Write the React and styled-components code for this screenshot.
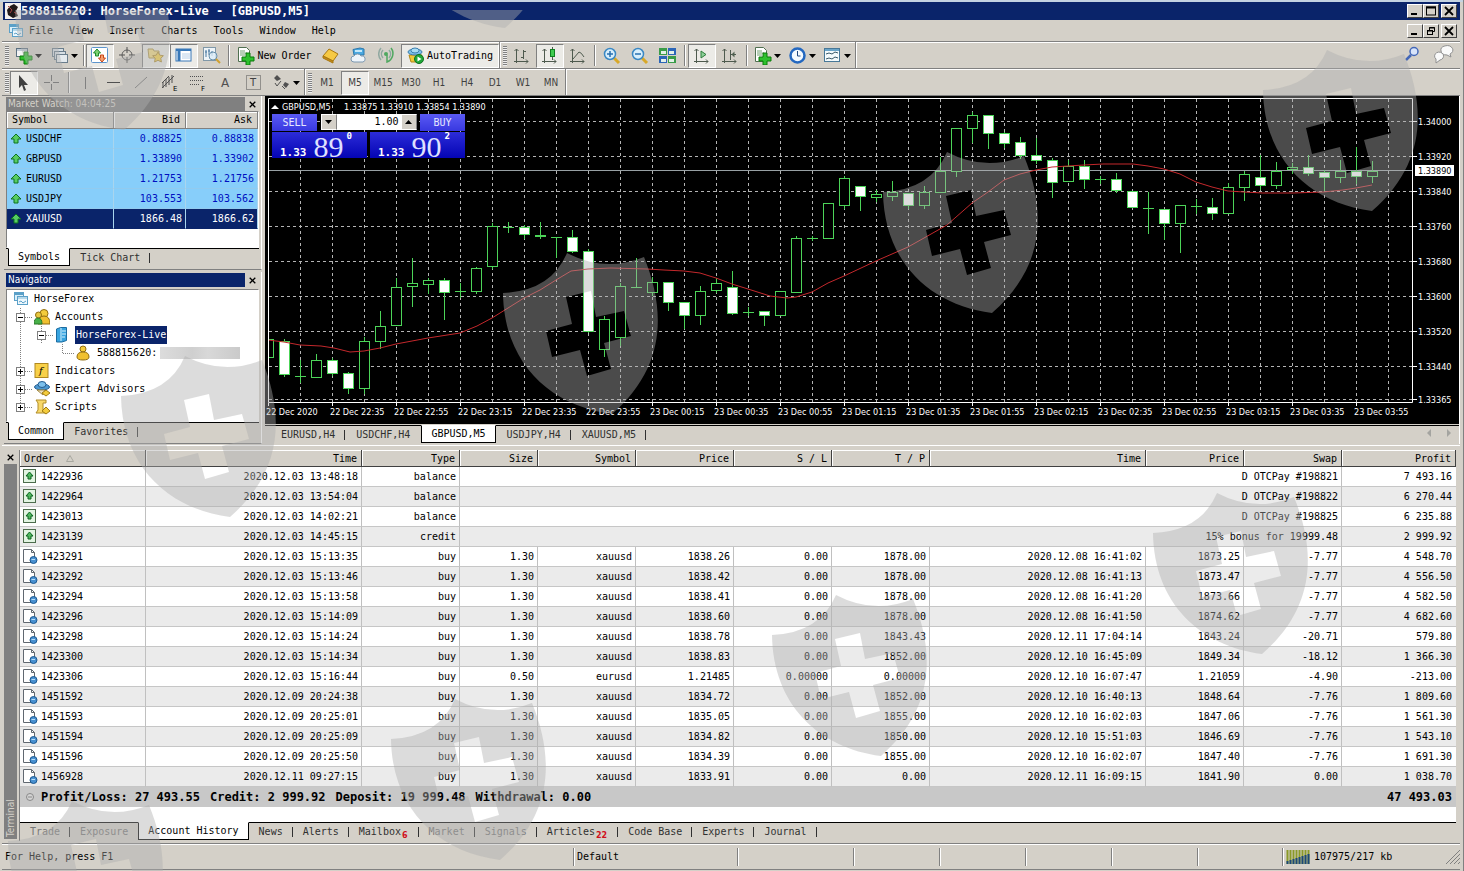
import React from 'react'
import styled, { createGlobalStyle, css } from 'styled-components';

// template props
const tp = {
  face: '#d4d0c8',
  shadow: '#808080',
  navy: '#0a246a',
  quote: '#87cefa',
  mono: '"DejaVu Sans Mono", "Liberation Mono", monospace',
  sans: '"DejaVu Sans Condensed", "DejaVu Sans", sans-serif',
}

const GlobalStyle = createGlobalStyle`
  * {
    box-sizing: border-box;
  }

  body {
    margin: 0;
    background: ${tp.face};
    color: #000;
    font: 10px/14px ${tp.mono};
  }

  button, input {
    margin: 0;
    padding: 0;
    border: 0;
    border-radius: 0;
    background: none;
    color: inherit;
    font: inherit;
  }

  svg {
    display: block;
    flex: none;
  }
`

const raised = css`
  border: 1px solid;
  border-color: #fff #404040 #404040 #fff;
`

const Window = styled.div`
  position: relative;
  display: flex;
  flex-direction: column;
  min-height: 100vh;
  padding: 2px 3px 0 2px;
  background: ${tp.face};
  border-right: 1px solid ${tp.shadow};
  overflow: hidden;
  box-shadow: inset 0 2px #c4d3e2;
`

const TitleBar = styled.header`
  display: flex;
  align-items: center;
  height: 18px;
  margin-left: 1px;
  padding: 0 3px 0 2px;
  background: ${tp.navy};
  color: #fff;
`

const Title = styled.h1`
  flex: 1;
  margin: 0;
  font-size: 12px;
  line-height: 18px;
  white-space: pre;
`

const Controls = styled.div`
  display: flex;
  margin-left: auto;

  button:last-child {
    margin-left: 2px;
  }
`

const ControlButton = styled.button`
  ${raised}
  display: flex;
  align-items: center;
  justify-content: center;
  width: 16px;
  height: 14px;
  background: ${tp.face};
`

const MenuBar = styled.nav`
  display: flex;
  align-items: center;
  gap: 16px;
  height: 21px;
  padding: 0 3px 0 6px;

  > svg {
    margin-right: -11px;
  }
`

const Toolbar = styled.div`
  display: flex;
  align-items: stretch;
  height: 27px;
  border-top: 1px solid ${tp.shadow};
  box-shadow: inset 0 1px #fff;
`

const ToolGroup = styled.div`
  display: flex;
  align-items: center;
  padding-top: 1px;
  border-right: 1px solid ${tp.shadow};
  box-shadow: 1px 0 #fff, inset 0 1px #fff;
`

const Handle = styled.span`
  width: 4px;
  height: 20px;
  margin: 0 1px 0 3px;
  background: repeating-linear-gradient(${tp.shadow} 0 1px, #eee 1px 2px);
`

const Separator = styled.span`
  width: 2px;
  height: 21px;
  margin: 0 ${props => props.$gap || 1}px;
  border-left: 1px solid ${tp.shadow};
  border-right: 1px solid #fff;
`

const ToolButton = styled.button`
  display: flex;
  align-items: center;
  justify-content: center;
  gap: 2px;
  width: ${props => props.$width || 28}px;
  height: 24px;
  border: 1px solid transparent;
  font-family: ${props => props.$small ? tp.sans : tp.mono};
  color: ${props => props.$small ? '#404040' : '#000'};
  ${props => props.$pressed && css`
    background: #ecebe7;
    border-color: ${tp.shadow} #fff #fff ${tp.shadow};
  `}
`

const ToolEnd = styled.div`
  display: flex;
  align-items: center;
  gap: 10px;
  margin-left: auto;
  padding-right: 6px;
`

const Workspace = styled.main`
  display: grid;
  grid-template-columns: 263px minmax(0, 1fr);
  border-top: 1px solid ${tp.shadow};
`

const Sidebar = styled.div`
  display: flex;
  flex-direction: column;
  gap: 2px;
  padding: 0 3px 0 2px;
`

const Panel = styled.section`
  display: flex;
  flex-direction: column;
  flex: ${props => props.$grow ? 1 : 'none'};
  padding: 1px 2px 2px;
  border-bottom: 1px solid ${tp.shadow};
  border-right: 1px solid #fff;
`

const PanelTitle = styled.div`
  display: grid;
  grid-template-columns: 1fr 14px;
  height: 14px;
  align-items: stretch;

  h2 {
    margin: 0;
    padding-left: 2px;
    background: ${props => props.$active ? tp.navy : tp.shadow};
    color: ${props => props.$active ? '#fff' : '#d4d0c8'};
    font: 10px/14px ${tp.sans};
  }
`

const CloseButton = styled.button`
  display: flex;
  align-items: center;
  justify-content: center;
  width: 14px;
  height: 14px;
`

const PanelBody = styled.div`
  flex: 1;
  margin-top: ${props => props.$top || 0}px;
  background: #fff;
  border: 1px solid;
  border-color: ${tp.shadow} transparent transparent ${tp.shadow};
`

const QuoteTable = styled.table`
  width: 100%;
  table-layout: fixed;
  border-collapse: separate;
  border-spacing: 0;
  margin-bottom: 18px;

  th {
    height: 17px;
    padding: 0 5px;
    background: ${tp.face};
    border-right: 1px solid ${tp.shadow};
    border-bottom: 1px solid ${tp.shadow};
    box-shadow: inset 1px 1px #fff;
    font-weight: normal;
    text-align: right;
  }

  td {
    height: 20px;
    padding: 0 3px;
    background: ${tp.quote};
    border-right: 1px solid #a9d5ee;
    border-bottom: 1px solid #92cbef;
    color: #0010c0;
    text-align: right;
  }

  th:first-child, td:first-child {
    text-align: left;
  }

  td:first-child {
    color: #000;
  }

  tr:last-child td, tr:last-child td:first-child {
    background: ${tp.navy};
    border-bottom-color: ${tp.navy};
    color: #fff;
  }
`

const IconText = styled.span`
  display: flex;
  align-items: center;
  gap: ${props => props.$gap || 4}px;
`

const TabList = styled.div`
  display: flex;
  align-items: flex-start;
  gap: ${props => props.$gap || 0}px;
  height: 19px;
  padding-left: ${props => props.$left || 0}px;
  border-top: 1px solid #000;
  white-space: pre;
`

const Tab = styled.button`
  position: relative;
  height: 18px;
  padding: 0 10px;
  color: ${props => props.$dim ? '#767676' : '#303030'};
  white-space: pre;

  &:after {
    content: '';
    position: absolute;
    right: 0;
    top: 4px;
    height: 10px;
    width: 1px;
    background: #303030;
    display: ${props => props.$bar === false ? 'none' : 'block'};
  }

  ${props => props.$active && css`
    margin-top: -1px;
    padding: 0 9px;
    background: #fff;
    border: 1px solid #000;
    border-top-color: #fff;
    color: #000;

    &:after {
      display: none;
    }
  `}

  sub {
    margin: 0 1px;
    color: #d01020;
    font: bold 8px/8px "DejaVu Sans", sans-serif;
  }
`

const Tree = styled.ul`
  margin: 0;
  padding: 0 0 0 6px;
  list-style: none;
`

const TreeRow = styled.li`
  display: flex;
  align-items: center;
  height: 18px;
  white-space: pre;
`

const TreeIcon = styled.span`
  width: 21px;
`

const TreeLabel = styled.span`
  padding: 2px 1px;
  margin-left: -1px;
  background: ${props => props.$selected ? tp.navy : 'none'};
  color: ${props => props.$selected ? '#fff' : '#000'};
`

const Mosaic = styled.span`
  width: 80px;
  height: 12px;
  margin-left: 2px;
  background: linear-gradient(90deg, #dcdcdc, #cfcfcf 40%, #d8d8d8 60%, #cacaca);
`

const ChartPane = styled.section`
  position: relative;
  display: flex;
  flex-direction: column;
  min-width: 0;
  background: ${tp.face};
  border-right: 1px solid #fff;
`

const ChartSvg = styled.svg`
  width: 100%;
  height: auto;
  background: #000;
  font-family: ${tp.sans};
  font-size: 9px;
`

const ChartTabs = styled.div`
  display: flex;
  justify-content: space-between;
  align-items: center;
  padding-top: 1px;

  > div:first-child {
    flex: 1;
  }
`

const Arrows = styled.div`
  position: absolute;
  right: 6px;
  bottom: 7px;
`

const TradePanel = styled.form`
  position: absolute;
  left: 7px;
  top: 18px;
  display: grid;
  grid-template-columns: 95px 95px;
  grid-template-rows: 17px 26px;
  gap: 1px 3px;
  color: #e6e8ff;
`

const TradeHead = styled.div`
  grid-column: 1 / 3;
  display: flex;
  justify-content: space-between;
`

const TradeSide = styled.button`
  width: 45px;
  background: linear-gradient(#5a5af4, #3838e0);
`

const Volume = styled.div`
  display: flex;
  width: 96px;
  height: 16px;
  background: #fff;
  color: #000;

  button {
    display: flex;
    align-items: center;
    justify-content: center;
    width: 16px;
    background: ${tp.face};
    border: 1px solid #fff;
    border-right-color: ${tp.shadow};
  }

  input {
    flex: 1;
    min-width: 0;
    padding-right: 2px;
    text-align: right;
  }
`

const Price = styled.div`
  display: flex;
  align-items: flex-end;
  height: 26px;
  padding-left: 8px;
  background: linear-gradient(#2c2cd8, #0404b4);
  font: bold 11px/10px ${tp.mono};
  color: #fff;

  strong {
    margin-left: 7px;
    font: 30px/22px "Liberation Serif", serif;
    color: #dfe0ff;
  }

  sup {
    align-self: flex-start;
    margin-left: 3px;
    line-height: 8px;
  }
`

const Terminal = styled.section`
  display: grid;
  grid-template-columns: 14px minmax(0, 1fr);
  gap: 2px;
  margin-top: 1px;
  padding: 4px 4px 0 1px;
  border-top: 1px solid #fff;
`

const TerminalSide = styled.div`
  display: flex;
  flex-direction: column;
  align-items: center;
  padding-bottom: 2px;
`

const TerminalLabel = styled.h2`
  flex: 1;
  width: 13px;
  margin: 0;
  padding-top: 2px;
  background: ${tp.shadow};
  color: ${tp.face};
  font: 10px/13px ${tp.sans};
  writing-mode: vertical-rl;
  transform: rotate(180deg);
`

const TerminalBody = styled.div`
  min-width: 0;
  border-left: 1px solid ${tp.shadow};
  background: #fff;
`

const Orders = styled.table`
  width: 100%;
  table-layout: fixed;
  border-collapse: separate;
  border-spacing: 0;
  white-space: pre;

  th {
    height: 17px;
    padding: 1px 4px 0;
    background: ${tp.face};
    border-right: 1px solid #404040;
    border-bottom: 1px solid #404040;
    box-shadow: inset 1px 1px #fff;
    font-weight: normal;
    text-align: right;
  }

  td {
    height: 20px;
    padding: 0 3px;
    border-right: 1px solid #c0c0c0;
    border-bottom: 1px solid #c6c6c6;
    text-align: right;
  }

  th:first-child, td:first-child {
    text-align: left;
  }

  td:last-child {
    border-right: 0;
    padding-right: 4px;
  }

  tbody tr:nth-child(even) td {
    background: #ebebeb;
  }

  tfoot td {
    background: #c8c8c8;
    border-color: #c8c8c8;
    font-weight: bold;
    font-size: 12px;
  }

  tfoot td:last-child {
    font-size: 12px;
  }
`

const Totals = styled.span`
  display: flex;
  align-items: center;
  gap: 10px;
  padding-left: 3px;

  svg {
    margin-right: -3px;
  }
`

const TerminalTabs = styled.div`
  margin-top: 15px;
  background: ${tp.face};
`

const StatusBar = styled.footer`
  display: grid;
  grid-template-columns: minmax(0, 1fr) 164px 116px 86px 86px 86px 86px 85px 178px;
  align-items: center;
  height: 27px;
  margin-top: 2px;
  border-top: 1px solid ${tp.shadow};
  border-bottom: 1px solid ${tp.shadow};
  box-shadow: inset 0 1px #fff;
`

const StatusCell = styled.div`
  display: flex;
  align-items: center;
  gap: 4px;
  height: 18px;
  padding-left: 3px;
  border-left: ${props => props.$first ? '0' : '1px solid #808080'};
  box-shadow: ${props => props.$first ? 'none' : 'inset 1px 0 #fff'};

  svg:last-child {
    margin-left: auto;
  }
`

const Watermark = styled.svg`
  position: absolute;
  left: 0;
  top: 10px;
  width: 100%;
  height: calc(100% - 10px);
  pointer-events: none;
`

const icons = {
  horse: <><rect width="16" height="16" fill="#f4f0ee" /><path d="M3 12 2 7l3-4 4-2 4 3-2 4 2 5-5 2z" fill="#201818" /><path d="m3 3 4 4-2 3M9 9l3 2" stroke="#a44" fill="none" /></>,
  windows: <><rect x="1.5" y="1.5" width="9" height="8" fill="#d9effa" stroke="#5ba0c8" /><path d="M1 3h10" stroke="#5ba0c8" strokeWidth="2" /><rect x="4.500" y="5.500" width="10" height="8" fill="#eef8fd" stroke="#5ba0c8" /><path d="M5 7h9" stroke="#7db8d8" /><path d="m6 11 2-1 2 2 3-2" stroke="#5ba0c8" fill="none" /></>,
  newChart: <><rect x="1.500" y="1.500" width="11" height="8" fill="#f4f4f4" stroke="#5c7080" /><path d="M2 3h10" stroke="#8aa0b4" /><path d="M9 5h4v4h4v4h-4v4H9v-4H5V9h4z" fill="#2dc02d" stroke="#0b7a0b" /></>,
  profiles: <><rect x="1.500" y="1.500" width="11" height="8" fill="#d6dee4" stroke="#6a7d8c" /><rect x="3.500" y="4.500" width="11" height="8" fill="#d6dee4" stroke="#6a7d8c" /><rect x="5.500" y="7.500" width="11" height="8" fill="#e4eaee" stroke="#6a7d8c" /></>,
  market: <><rect x=".5" y=".5" width="16" height="15" rx="1" fill="#fff" stroke="#5c94cc" /><path d="m6 2 3.500 4H7.500v3h-3V6h-2z" fill="#7cd070" stroke="#1f8c2a" /><path d="m11 15-3.500-4h2V8h3v3h2z" fill="#f4a070" stroke="#c84818" /></>,
  cross: <><circle cx="8" cy="8" r="5" fill="none" stroke="#606060" /><path d="M8 0v6M8 10v6M0 8h6M10 8h6" stroke="#505050" /></>,
  folder: <><path d="M1 2h5l1 2h5v7H2z" fill="#f4dc80" stroke="#b0984c" /><path d="m11 5 1.800 3.200 3.600.5-2.600 2.600.6 3.700-3.400-1.700L7.600 15l.6-3.700-2.600-2.600 3.600-.5z" fill="#f8d448" stroke="#b0903a" /></>,
  navigator: <><rect x="1" y="2" width="15" height="12" fill="#fff" stroke="#3878b8" /><path d="M1 3h15" stroke="#3878b8" strokeWidth="2" /><path d="M4 3v11" stroke="#3878b8" strokeWidth="3" /><path d="M7 7h8M7 9h8M7 11h8" stroke="#b8d0e8" /></>,
  tester: <><rect x=".5" y=".5" width="12" height="13" fill="#eef4f8" stroke="#8098a8" /><path d="M3 3v7M6 2v6M9 4v5M2 5h2M5 4h2M8 6h2" stroke="#4878a0" /><circle cx="10" cy="9" r="4" fill="#dcecf6" fillOpacity=".8" stroke="#6890ac" /><path d="m13 12 4 4" stroke="#d0a030" strokeWidth="2" /></>,
  order: <><path d="M1.500.5h8l3 3v11h-11z" fill="#fff" stroke="#507050" /><path d="M3 4h5M3 6h7M3 8h5" stroke="#70a070" /><path d="M9 6h4v4h4v4h-4v4H9v-4H5v-4h4z" fill="#2dc02d" stroke="#0b7a0b" /></>,
  gold: <><path d="m1 9 6-7 9 5-5 7z" fill="#f6c944" stroke="#a87812" /><path d="m1 9 10 5v2L1 11z" fill="#c88c18" stroke="#a87812" /></>,
  cloud: <><path d="M3 2.500 10 1l4 1v6H4z" fill="#4aa8e0" stroke="#2c78ac" /><path d="M5 4h7" stroke="#c4e8fa" strokeWidth="2" /><path d="M4 15a3 3 0 0 1 0-6 4 4 0 0 1 7 0 3 3 0 0 1 2 6z" fill="#eef4fa" stroke="#7c98b0" /></>,
  signal: <><circle cx="8" cy="7" r="2" fill="#50a860" /><path d="M5 3a6 6 0 0 0 0 8M3 1a9 9 0 0 0 0 12M11 3a6 6 0 0 1 0 8" stroke="#90a8a0" fill="none" strokeWidth="1.500" /><path d="M13 1a9 9 0 0 1-4 14V8" stroke="#50a860" fill="none" strokeWidth="1.500" /></>,
  auto: <><path d="M2 8h13l-2 7H4z" fill="#f0c838" stroke="#b08818" /><ellipse cx="8" cy="5" rx="7" ry="3" fill="#7cc0e8" stroke="#3c80b0" /><ellipse cx="8" cy="3.500" rx="4" ry="2.500" fill="#a8dcf4" stroke="#3c80b0" /><circle cx="12" cy="12" r="4.500" fill="#20a838" stroke="#107020" /><path d="m10.500 9.500 4 2.500-4 2.500z" fill="#fff" /></>,
  bars: <><path d="M3.500 2v14M1 14.500h14M1.500 4l2-2 2 2M13 12.500l2 2-2 2M10.500 3v9M8 10.500h2M11 4.500h2" stroke="#4e5a4e" fill="none" /></>,
  candles: <><path d="M3.500 2v14M1 14.500h14M1.500 4l2-2 2 2M13 12.500l2 2-2 2M11.500 0v13" stroke="#4e5a4e" fill="none" /><rect x="9.500" y="2.500" width="4" height="7" fill="#40cc50" stroke="#108020" /></>,
  line: <><path d="M3.500 2v14M1 14.500h14M1.500 4l2-2 2 2M13 12.500l2 2-2 2M4 12l6-7q2 0 5 5" stroke="#4e5a4e" fill="none" /></>,
  zoomIn: <><path d="m10 10 6 6" stroke="#d8a828" strokeWidth="3" /><circle cx="7" cy="7" r="5.500" fill="#d8effc" stroke="#3a88c4" strokeWidth="1.500" /><path d="M4 7h6M7 4v6" stroke="#2870b0" strokeWidth="1.500" /></>,
  zoomOut: <><path d="m10 10 6 6" stroke="#d8a828" strokeWidth="3" /><circle cx="7" cy="7" r="5.500" fill="#d8effc" stroke="#3a88c4" strokeWidth="1.500" /><path d="M4 7h6" stroke="#2870b0" strokeWidth="1.500" /></>,
  tile: <><rect y="1" width="8" height="7" fill="#3a9c48" /><rect x="9" y="1" width="8" height="7" fill="#2c66b8" /><rect y="9" width="8" height="7" fill="#2c66b8" /><rect x="9" y="9" width="8" height="7" fill="#3a9c48" /><path d="M2 4h5v3H2zM10 4h5v3h-5zM2 12h5v3H2zM10 12h5v3h-5z" fill="#e4f0e8" /></>,
  scroll: <><path d="M3.500 2v14M1 14.500h14M1.500 4l2-2 2 2M13 12.500l2 2-2 2" stroke="#4e5a4e" fill="none" /><path d="m8 4 5 3.500L8 11z" fill="#8cd098" stroke="#2f7c3c" /></>,
  shift: <><path d="M3.500 2v14M1 14.500h14M1.500 4l2-2 2 2M13 12.500l2 2-2 2M9.500 3v10M10 7.500h5" stroke="#4e5a4e" fill="none" /><path d="m13.500 4.500-3 3 3 3z" fill="#506050" /></>,
  clock: <><circle cx="8.500" cy="8.500" r="7" fill="#f4faff" stroke="#2468c0" strokeWidth="2.500" /><path d="M8.500 4v5h3" stroke="#204880" fill="none" /></>,
  template: <><rect x=".5" y="1.500" width="15" height="13" fill="#f4fafc" stroke="#487898" /><path d="M1 3h14" stroke="#6aa4c8" strokeWidth="2" /><path d="m2 7 3-1 3 1 3-2 3 1M2 12l3-1 3 1 3-2 3 1" stroke="#385868" fill="none" /></>,
  search: <><circle cx="10" cy="5.500" r="4" fill="#d8e4fa" stroke="#4468b8" strokeWidth="1.500" /><path d="m7 9-5 5" stroke="#4468b8" strokeWidth="2.500" /></>,
  chat: <><path d="M9 7a6 4.500 0 1 1 9 3l1 3-4-2a6 4.500 0 0 1-6-4" fill="#fafafa" stroke="#909090" /><path d="M4 15a4.500 4 0 1 1 4 1l-4 3z" fill="#fafafa" stroke="#909090" /></>,
  cursor: <path d="M4 1v13l3-3 2 6 2-1-2-5h4z" fill="#404040" />,
  plus: <path d="M8.500 1v6M8.500 10v6M1 8.500h6M10 8.500h6" stroke="#606060" />,
  vline: <path d="M8.500 3v12" stroke="#606060" />,
  hline: <path d="M2 8.500h13" stroke="#505050" />,
  diag: <path d="M2 14 14 3" stroke="#707070" />,
  channel: <><path d="m1 14 12-12M1 9l7-7M5 5v8M8 3v8M11 1v8M2 8v6" stroke="#505050" /><text x="12" y="17" fontSize="7" fontFamily="DejaVu Sans">E</text></>,
  fibo: <><path d="M1 2.500h14M1 6.500h14M1 10.500h10" stroke="#505050" strokeDasharray="1 1" /><text x="12" y="17" fontSize="7" fontFamily="DejaVu Sans">F</text></>,
  text: <text x="4" y="13" fontSize="12" fill="#505050" fontFamily="DejaVu Sans">A</text>,
  label: <><rect x="1.500" y="1.500" width="14" height="14" fill="none" stroke="#505050" strokeDasharray="1 1" /><text x="5" y="12" fontSize="10" fill="#404040" fontFamily="DejaVu Sans">T</text></>,
  shapes: <><path d="m4 1 4 4-4 2-3-3zM12 8l4 2-3 4-3-3z" fill="#505050" /><path d="m2 9 2 3 4-5M9 12l3 3" stroke="#505050" fill="none" /></>,
  up: <path d="m6 1 5 5H8v4H4V6H1z" fill="#58cc64" stroke="#0c7420" />,
  credit: <><rect x=".5" y=".5" width="12" height="13" fill="#e2f4e2" stroke="#4c6c4c" /><path d="m6.500 3 3.500 4H8v3H5V7H3z" fill="#50b860" stroke="#0c6420" /></>,
  deal: <><path d="M.5.5h8l3 3v10H.5z" fill="#fff" stroke="#606870" /><path d="M8.500.5v3h3" fill="none" stroke="#606870" /><circle cx="10.500" cy="11" r="3.500" fill="#4890d0" stroke="#1c5890" /><path d="M8.500 10.500h3.500" stroke="#b8e0fa" /></>,
  users: <><circle cx="10" cy="4.500" r="4" fill="#f4cc3c" stroke="#906c10" /><path d="M4 15q0-8 6-8t6 8z" fill="#f0c030" stroke="#906c10" /><circle cx="4.500" cy="6" r="3" fill="#e8c840" stroke="#906c10" /><path d="M0 15q0-6 4-6t4 6z" fill="#48b048" stroke="#287828" /></>,
  user: <><circle cx="7" cy="4" r="3" fill="#f4cc3c" stroke="#906c10" /><path d="M1 12q0-5 6-5t6 5q0 3-6 3t-6-3z" fill="#f0c030" stroke="#906c10" /></>,
  server: <><path d="m1.500 2 4-1.500h6v13L7 15H1.500z" fill="#38a4e0" stroke="#1c6ca0" /><path d="M6 1v13M7 4h4M7 7h4M7 10h3" stroke="#d4f0fc" /></>,
  indicator: <><rect x="1" y=".5" width="13" height="14" fill="#f8d048" stroke="#b08820" /><text x="5" y="11" fontSize="10" fontStyle="italic" fontFamily="DejaVu Serif">f</text></>,
  expert: <><ellipse cx="8" cy="6" rx="7.500" ry="3" fill="#4c98d0" stroke="#245c90" /><ellipse cx="8" cy="3.500" rx="4" ry="3" fill="#7cc0ec" stroke="#245c90" /><path d="M3 9h8l-2 5z" fill="#e8dcc0" stroke="#a08840" /><path d="m12 9 4 3-4 3-4-3z" fill="#f4cc3c" stroke="#a07c14" /></>,
  script: <><path d="M2 1h10v3H9v7h3v3H2l2-3V4z" fill="#f8d868" stroke="#b08c28" /><path d="m12 8 4 4-4 3-4-3z" fill="#f4cc3c" stroke="#a07c14" /></>,
  minimize: <path d="M1 8h6" stroke="#000" strokeWidth="2" />,
  maximize: <><rect x=".5" y="1" width="9" height="8" fill="none" stroke="#000" /><path d="M0 1.500h10" stroke="#000" strokeWidth="2" /></>,
  restore: <><path d="M3.500 4V1.500h5v4H7M3 2h6" stroke="#000" fill="none" /><rect x="1.500" y="4.500" width="5" height="4" fill="none" stroke="#000" /><path d="M1 5h6" stroke="#000" /></>,
  close: <path d="m1 1 8 8M9 1 1 9" stroke="#000" strokeWidth="1.800" />,
}

const Icon = ({ name, size = 18, box = 18 }) => (
  <svg width={size} height={size} viewBox={`0 0 ${box} ${box}`} aria-hidden="true">{icons[name]}</svg>
)

const Caret = () => (
  <svg width="7" height="4" viewBox="0 0 7 4"><path d="M0 0h7L3.500 4z" fill="#000" /></svg>
)

const CaretUp = () => (
  <svg width="7" height="4" viewBox="0 0 7 4"><path d="M0 4h7L3.500 0z" fill="#000" /></svg>
)

const Tool = ({ icon, menu, children, ...rest }) => (
  <ToolButton type="button" aria-label={icon} {...rest}>
    <Icon name={icon} />
    {children}
    {menu && <Caret />}
  </ToolButton>
)

const WindowControls = ({ middle }) => (
  <Controls>
    {['minimize', middle, 'close'].map(name => (
      <ControlButton key={name} type="button" aria-label={name}>
        <Icon name={name} size={10} box={10} />
      </ControlButton>
    ))}
  </Controls>
)

const Close = () => (
  <CloseButton type="button" aria-label="close">
    <Icon name="close" size={7} box={10} />
  </CloseButton>
)

const menu = ['File', 'View', 'Insert', 'Charts', 'Tools', 'Window', 'Help']
const periods = ['M1', 'M5', 'M15', 'M30', 'H1', 'H4', 'D1', 'W1', 'MN']

const quotes = [
  ['USDCHF', '0.88825', '0.88838'],
  ['GBPUSD', '1.33890', '1.33902'],
  ['EURUSD', '1.21753', '1.21756'],
  ['USDJPY', '103.553', '103.562'],
  ['XAUUSD', '1866.48', '1866.62'],
]

const tree = [
  { guides: [], icon: 'windows', label: 'HorseForex' },
  { guides: ['minus'], icon: 'users', label: 'Accounts' },
  { guides: ['line', 'minus'], icon: 'server', label: 'HorseForex-Live', selected: true },
  { guides: ['line', 'blank', 'elbow'], icon: 'user', label: '588815620:', masked: true },
  { guides: ['plus'], icon: 'indicator', label: 'Indicators' },
  { guides: ['plus'], icon: 'expert', label: 'Expert Advisors' },
  { guides: ['last'], icon: 'script', label: 'Scripts' },
]

const Guide = ({ type }) => {
  const box = type === 'plus' || type === 'minus' || type === 'last'
  const end = type === 'last' || type === 'elbow' ? 9 : 18

  return (
    <svg width="21" height="18" viewBox="0 0 21 18">
      {type !== 'blank' && <path d={`M7.500 0V${end}`} stroke="#808080" strokeDasharray="1 1" />}
      {(box || type === 'elbow') && <path d="M8 9.500h11" stroke="#808080" strokeDasharray="1 1" />}
      {box && <rect x="3.500" y="5.500" width="8" height="8" fill="#fff" stroke="#808080" />}
      {box && <path d="M5 9.500h5" stroke="#000" />}
      {box && type !== 'minus' && <path d="M7.500 7v5" stroke="#000" />}
    </svg>
  )
}

// high, body top, body bottom, low, filled
const candles = [
  [234, 243, 261, 262, 0], [243, 245, 278, 280, 1], [264, 280, 280, 286, 0], [258, 264, 281, 281, 0],
  [262, 264, 277, 279, 1], [276, 277, 292, 297, 1], [241, 245, 292, 297, 0], [215, 230, 245, 252, 0],
  [182, 191, 229, 229, 0], [162, 187, 190, 210, 0], [182, 184, 188, 197, 0], [182, 184, 196, 223, 1],
  [187, 195, 195, 201, 0], [171, 172, 195, 197, 0], [127, 130, 170, 172, 0], [126, 131, 131, 136, 0],
  [129, 131, 138, 142, 1], [126, 139, 140, 142, 1], [141, 141, 141, 161, 0], [134, 141, 155, 156, 1],
  [153, 155, 235, 236, 1], [220, 223, 253, 260, 0], [187, 190, 241, 249, 0], [162, 191, 191, 191, 0],
  [181, 186, 196, 199, 0], [186, 186, 206, 214, 1], [206, 206, 219, 232, 1], [190, 195, 219, 228, 0],
  [182, 187, 194, 196, 0], [175, 191, 217, 218, 1], [211, 216, 216, 219, 0], [215, 215, 219, 229, 1],
  [195, 195, 219, 219, 0], [140, 142, 196, 196, 0], [140, 142, 142, 144, 0], [107, 107, 142, 142, 0],
  [80, 82, 109, 112, 0], [90, 90, 100, 114, 1], [94, 98, 101, 105, 0], [85, 96, 100, 104, 0],
  [97, 97, 109, 112, 1], [90, 96, 109, 112, 0], [61, 75, 96, 96, 0], [32, 32, 75, 80, 0],
  [16, 19, 32, 46, 0], [19, 19, 37, 52, 1], [36, 37, 47, 51, 1], [41, 46, 59, 62, 1],
  [42, 59, 64, 67, 1], [62, 64, 86, 101, 1], [64, 70, 85, 85, 0], [64, 70, 83, 92, 1],
  [80, 83, 83, 87, 0], [77, 83, 94, 96, 1], [95, 95, 111, 111, 1], [96, 112, 112, 137, 0],
  [113, 113, 127, 143, 1], [109, 109, 127, 156, 0], [103, 110, 110, 117, 0], [102, 111, 117, 123, 1],
  [87, 91, 117, 117, 0], [75, 78, 91, 104, 0], [59, 81, 89, 93, 1], [66, 75, 89, 92, 0],
  [67, 71, 73, 77, 0], [59, 71, 77, 79, 1], [74, 76, 81, 94, 1], [64, 75, 81, 86, 0],
  [51, 75, 80, 87, 1], [65, 75, 80, 86, 0],
]

const average = [
  [3, 244], [19, 246], [35, 249], [56, 250], [69, 252], [85, 256], [99, 255], [115, 252], [131, 248],
  [163, 242], [195, 237], [212, 230], [227, 222], [243, 212], [259, 202], [275, 194], [291, 184],
  [306, 175], [323, 173], [346, 172], [382, 173], [399, 174], [419, 175], [435, 177], [451, 182],
  [467, 188], [483, 193], [505, 200], [522, 202], [531, 201], [547, 196], [563, 187], [579, 180],
  [611, 165], [643, 151], [659, 142], [682, 129], [707, 107], [723, 96], [739, 84], [755, 78],
  [771, 74], [787, 71], [803, 70], [819, 69], [838, 68], [868, 68], [883, 70], [899, 73], [915, 78],
  [931, 86], [947, 91], [963, 95], [979, 96], [998, 97], [1028, 97], [1058, 96], [1078, 94],
  [1091, 92], [1107, 89],
]

const levels = [
  [25, '1.34000'], [60, '1.33920'], [95, '1.33840'], [130, '1.33760'], [165, '1.33680'],
  [200, '1.33600'], [235, '1.33520'], [270, '1.33440'], [303, '1.33365'],
]

const times = [
  '22 Dec 2020', '22 Dec 22:35', '22 Dec 22:55', '22 Dec 23:15', '22 Dec 23:35', '22 Dec 23:55',
  '23 Dec 00:15', '23 Dec 00:35', '23 Dec 00:55', '23 Dec 01:15', '23 Dec 01:35', '23 Dec 01:55',
  '23 Dec 02:15', '23 Dec 02:35', '23 Dec 02:55', '23 Dec 03:15', '23 Dec 03:35', '23 Dec 03:55',
]

const Chart = () => (
  <ChartSvg viewBox="0 0 1194 328">
    <clipPath id="plot"><rect x="3" y="2" width="1145" height="305" /></clipPath>
    <g stroke="#b4b4b4" strokeDasharray="3 3">
      {Array.from({ length: 35 }, (_, i) => (
        <path key={i} d={`M${35.5 + i * 32} 3V306`} />
      ))}
      {levels.map(([y]) => <path key={y} d={`M4 ${y + 0.5}H1147`} />)}
    </g>
    <path d="M4 74.500H1147" stroke="#98a0a4" />
    <g clipPath="url(#plot)" stroke="#4cd458">
      {candles.map(([high, top, bottom, low, filled], i) => {
        const x = 3.5 + i * 16
        return (
          <g key={i}>
            <path d={`M${x} ${high}V${low + 1}`} />
            {top === bottom
              ? <path d={`M${x - 5.5} ${top + 0.5}h11`} />
              : <rect x={x - 5} y={top + 0.5} width="10" height={bottom - top} fill={filled ? '#fff' : '#000'} />}
          </g>
        )
      })}
      <polyline points={average.join(' ')} fill="none" stroke="#c4282c" />
    </g>
    <path d="M3.500 306.500V2.500H1147.500V306.500z" fill="none" stroke="#fff" />
    <g fill="#fff">
      {levels.map(([y, label]) => (
        <React.Fragment key={y}>
          <path d={`M1148 ${y + 0.5}h4`} stroke="#fff" />
          <text x="1153" y={y + 4}>{label}</text>
        </React.Fragment>
      ))}
      {times.map((label, i) => (
        <React.Fragment key={label}>
          <path d={`M${3.5 + i * 64} 307v3`} stroke="#fff" />
          <text x={1 + i * 64} y="319">{label}</text>
        </React.Fragment>
      ))}
      <rect x="1150" y="69" width="39" height="11" />
      <text x="1153" y="78" fill="#000">1.33890</text>
      <path d="m6 13 4-4 4 4z" />
      <text x="17" y="14">GBPUSD,M5</text>
      <text x="79" y="14">1.33875 1.33910 1.33854 1.33890</text>
    </g>
  </ChartSvg>
)

const columns = [
  ['Order', 126], ['Time', 216], ['Type', 98], ['Size', 78], ['Symbol', 98], ['Price', 98],
  ['S / L', 98], ['T / P', 98], ['Time', 216], ['Price', 98], ['Swap', 98], ['Profit'],
]

const operations = [
  ['1422936', '2020.12.03 13:48:18', 'balance', 'D OTCPay #198821', '7 493.16'],
  ['1422964', '2020.12.03 13:54:04', 'balance', 'D OTCPay #198822', '6 270.44'],
  ['1423013', '2020.12.03 14:02:21', 'balance', 'D OTCPay #198825', '6 235.88'],
  ['1423139', '2020.12.03 14:45:15', 'credit', '15% bonus for 19999.48', '2 999.92'],
]

const deals = [
  ['1423291', '2020.12.03 15:13:35', 'buy', '1.30', 'xauusd', '1838.26', '0.00', '1878.00', '2020.12.08 16:41:02', '1873.25', '-7.77', '4 548.70'],
  ['1423292', '2020.12.03 15:13:46', 'buy', '1.30', 'xauusd', '1838.42', '0.00', '1878.00', '2020.12.08 16:41:13', '1873.47', '-7.77', '4 556.50'],
  ['1423294', '2020.12.03 15:13:58', 'buy', '1.30', 'xauusd', '1838.41', '0.00', '1878.00', '2020.12.08 16:41:20', '1873.66', '-7.77', '4 582.50'],
  ['1423296', '2020.12.03 15:14:09', 'buy', '1.30', 'xauusd', '1838.60', '0.00', '1878.00', '2020.12.08 16:41:50', '1874.62', '-7.77', '4 682.60'],
  ['1423298', '2020.12.03 15:14:24', 'buy', '1.30', 'xauusd', '1838.78', '0.00', '1843.43', '2020.12.11 17:04:14', '1843.24', '-20.71', '579.80'],
  ['1423300', '2020.12.03 15:14:34', 'buy', '1.30', 'xauusd', '1838.83', '0.00', '1852.00', '2020.12.10 16:45:09', '1849.34', '-18.12', '1 366.30'],
  ['1423306', '2020.12.03 15:16:44', 'buy', '0.50', 'eurusd', '1.21485', '0.00000', '0.00000', '2020.12.10 16:07:47', '1.21059', '-4.90', '-213.00'],
  ['1451592', '2020.12.09 20:24:38', 'buy', '1.30', 'xauusd', '1834.72', '0.00', '1852.00', '2020.12.10 16:40:13', '1848.64', '-7.76', '1 809.60'],
  ['1451593', '2020.12.09 20:25:01', 'buy', '1.30', 'xauusd', '1835.05', '0.00', '1855.00', '2020.12.10 16:02:03', '1847.06', '-7.76', '1 561.30'],
  ['1451594', '2020.12.09 20:25:09', 'buy', '1.30', 'xauusd', '1834.82', '0.00', '1850.00', '2020.12.10 15:51:03', '1846.69', '-7.76', '1 543.10'],
  ['1451596', '2020.12.09 20:25:50', 'buy', '1.30', 'xauusd', '1834.39', '0.00', '1855.00', '2020.12.10 16:02:07', '1847.40', '-7.76', '1 691.30'],
  ['1456928', '2020.12.11 09:27:15', 'buy', '1.30', 'xauusd', '1833.91', '0.00', '0.00', '2020.12.11 16:09:15', '1841.90', '0.00', '1 038.70'],
]

const OrderCell = ({ icon, children }) => (
  <td><IconText $gap={3}><Icon name={icon} size={15} box={15} />{children}</IconText></td>
)

const OrderTable = () => (
  <Orders>
    <colgroup>
      {columns.map(([, width], i) => <col key={i} width={width} />)}
    </colgroup>
    <thead>
      <tr>
        {columns.map(([label], i) => (
          <th key={i}>
            {i === 0
              ? <IconText $gap={12}>{label}<svg width="8" height="7" viewBox="0 0 8 7"><path d="M.5 6.500h7L4 .5z" fill="none" stroke="#a8a8a0" /></svg></IconText>
              : label}
          </th>
        ))}
      </tr>
    </thead>
    <tbody>
      {operations.map(([order, time, type, comment, profit]) => (
        <tr key={order}>
          <OrderCell icon="credit">{order}</OrderCell>
          <td>{time}</td>
          <td>{type}</td>
          <td colSpan={8}>{comment}</td>
          <td>{profit}</td>
        </tr>
      ))}
      {deals.map(([order, ...cells]) => (
        <tr key={order}>
          <OrderCell icon="deal">{order}</OrderCell>
          {cells.map((cell, i) => <td key={i}>{cell}</td>)}
        </tr>
      ))}
    </tbody>
    <tfoot>
      <tr>
        <td colSpan={11}>
          <Totals>
            <svg width="8" height="8" viewBox="0 0 8 8"><circle cx="4" cy="4" r="3.500" fill="#d4d4d4" stroke="#888" /><path d="M2 4h4" stroke="#888" /></svg>
            <span>Profit/Loss: 27 493.55</span>
            <span>Credit: 2 999.92</span>
            <span>Deposit: 19 999.48</span>
            <span>Withdrawal: 0.00</span>
          </Totals>
        </td>
        <td>47 493.03</td>
      </tr>
    </tfoot>
  </Orders>
)

const terminalTabs = [
  { label: 'Trade', dim: true },
  { label: 'Exposure', dim: true, bar: false },
  { label: 'Account History', active: true },
  { label: 'News' },
  { label: 'Alerts' },
  { label: 'Mailbox', count: 6 },
  { label: 'Market', dim: true },
  { label: 'Signals', dim: true },
  { label: 'Articles', count: 22 },
  { label: 'Code Base' },
  { label: 'Experts' },
  { label: 'Journal' },
]

const chartTabs = [
  { label: 'EURUSD,H4' },
  { label: 'USDCHF,H4', bar: false },
  { label: 'GBPUSD,M5', active: true },
  { label: 'USDJPY,H4' },
  { label: 'XAUUSD,M5' },
]

const Tabs = ({ items, left, gap }) => (
  <TabList role="tablist" $left={left} $gap={gap}>
    {items.map(({ label, active, dim, bar, count }) => (
      <Tab key={label} type="button" role="tab" aria-selected={!!active} $active={active} $dim={dim} $bar={bar}>
        {label}{count && <sub>{count}</sub>}
      </Tab>
    ))}
  </TabList>
)

const shields = [
  [0, 0], [-380, 101], [380, -102], [-762, 204],
  [-111, 443], [270, 341], [-492, 547], [-875, 649],
  [-487, -285], [-868, -183],
]

const Shields = () => (
  <Watermark aria-hidden="true">
    <g fill="#afafaf" fillOpacity=".43" fillRule="evenodd">
      {shields.map(([x, y]) => (
        <path
          key={x}
          transform={`translate(${x} ${y - 10})`}
          d="M883 192Q931 190 947 152Q985 172 1024 156C1046 210 1046 266 992 313C930 305 884 262 883 192ZM946 196 952 223 926 230 932 256 960 249 967 275 991 268 984 242 1011 235 1004 210 976 216 971 190Z"
        />
      ))}
    </g>
  </Watermark>
)

const TradeBox = () => (
  <TradePanel onSubmit={(e) => e.preventDefault()}>
    <TradeHead>
      <TradeSide type="button">SELL</TradeSide>
      <Volume>
        <button type="button" aria-label="decrease"><Caret /></button>
        <input aria-label="Volume" defaultValue="1.00" />
        <button type="button" aria-label="increase"><CaretUp /></button>
      </Volume>
      <TradeSide type="button">BUY</TradeSide>
    </TradeHead>
    <Price>1.33<strong>89</strong><sup>0</sup></Price>
    <Price>1.33<strong>90</strong><sup>2</sup></Price>
  </TradePanel>
)

const App = () => (
  <>
    <GlobalStyle />
    <Window>
      <TitleBar>
        <Icon name="horse" size={16} box={16} />
        <Title>588815620: HorseForex-Live - [GBPUSD,M5]</Title>
        <WindowControls middle="maximize" />
      </TitleBar>
      <MenuBar>
        <Icon name="windows" size={16} box={16} />
        {menu.map(item => <button key={item} type="button">{item}</button>)}
        <WindowControls middle="restore" />
      </MenuBar>
      <Toolbar>
        <ToolGroup>
          <Handle />
          <Tool icon="newChart" menu $width={36} />
          <Tool icon="profiles" menu $width={36} />
          <Separator />
          <Tool icon="market" $pressed />
          <Tool icon="cross" />
          <Tool icon="folder" $pressed />
          <Tool icon="navigator" $pressed />
          <Tool icon="tester" />
          <Separator $gap={2} />
          <Tool icon="order" $width={85}>New Order</Tool>
          <Tool icon="gold" />
          <Tool icon="cloud" />
          <Tool icon="signal" />
          <Tool icon="auto" $pressed $width={98}>AutoTrading</Tool>
        </ToolGroup>
        <ToolGroup>
          <Handle />
          <Tool icon="bars" />
          <Tool icon="candles" $pressed />
          <Tool icon="line" />
          <Separator $gap={2} />
          <Tool icon="zoomIn" />
          <Tool icon="zoomOut" />
          <Tool icon="tile" />
          <Separator $gap={2} />
          <Tool icon="scroll" $pressed />
          <Tool icon="shift" />
          <Separator $gap={2} />
          <Tool icon="order" menu $width={35} />
          <Tool icon="clock" menu $width={35} />
          <Tool icon="template" menu $width={35} />
        </ToolGroup>
        <ToolEnd>
          <Icon name="search" />
          <Icon name="chat" size={22} box={22} />
        </ToolEnd>
      </Toolbar>
      <Toolbar>
        <ToolGroup>
          <Handle />
          <Tool icon="cursor" $pressed />
          <Tool icon="plus" />
          <Separator $gap={2} />
          <Tool icon="vline" />
          <Tool icon="hline" />
          <Tool icon="diag" />
          <Tool icon="channel" />
          <Tool icon="fibo" />
          <Tool icon="text" />
          <Tool icon="label" />
          <Tool icon="shapes" menu $width={36} />
        </ToolGroup>
        <ToolGroup>
          <Handle />
          {periods.map(period => (
            <ToolButton key={period} type="button" $small $pressed={period === 'M5'}>{period}</ToolButton>
          ))}
        </ToolGroup>
      </Toolbar>
      <Workspace>
        <Sidebar>
          <Panel>
            <PanelTitle>
              <h2>Market Watch: 04:04:25</h2>
              <Close />
            </PanelTitle>
            <PanelBody>
              <QuoteTable>
                <colgroup>
                  <col />
                  <col width="72" />
                  <col width="72" />
                </colgroup>
                <thead>
                  <tr><th>Symbol</th><th>Bid</th><th>Ask</th></tr>
                </thead>
                <tbody>
                  {quotes.map(([symbol, bid, ask]) => (
                    <tr key={symbol}>
                      <td><IconText><Icon name="up" size={12} box={12} />{symbol}</IconText></td>
                      <td>{bid}</td>
                      <td>{ask}</td>
                    </tr>
                  ))}
                </tbody>
              </QuoteTable>
            </PanelBody>
            <Tabs items={[{ label: 'Symbols', active: true }, { label: 'Tick Chart' }]} left={2} />
          </Panel>
          <Panel $grow>
            <PanelTitle $active>
              <h2>Navigator</h2>
              <Close />
            </PanelTitle>
            <PanelBody $top={2}>
              <Tree>
                {tree.map(({ guides, icon, label, selected, masked }) => (
                  <TreeRow key={label}>
                    {guides.map((type, i) => <Guide key={i} type={type} />)}
                    <TreeIcon><Icon name={icon} size={16} box={16} /></TreeIcon>
                    <TreeLabel $selected={selected}>{label}</TreeLabel>
                    {masked && <Mosaic />}
                  </TreeRow>
                ))}
              </Tree>
            </PanelBody>
            <Tabs items={[{ label: 'Common', active: true }, { label: 'Favorites' }]} left={2} />
          </Panel>
        </Sidebar>
        <ChartPane>
          <Chart />
          <TradeBox />
          <ChartTabs>
            <Tabs items={chartTabs} left={6} gap={1} />
            <Arrows>
              <svg width="26" height="8" viewBox="0 0 26 8"><path d="M4 0v8L0 4zM20 0v8l4-4z" fill="#a4a4a0" /></svg>
            </Arrows>
          </ChartTabs>
        </ChartPane>
      </Workspace>
      <Terminal>
        <TerminalSide>
          <Close />
          <TerminalLabel>Terminal</TerminalLabel>
        </TerminalSide>
        <TerminalBody>
          <OrderTable />
          <TerminalTabs>
            <Tabs items={terminalTabs} />
          </TerminalTabs>
        </TerminalBody>
      </Terminal>
      <StatusBar>
        <StatusCell $first>For Help, press F1</StatusCell>
        <StatusCell>Default</StatusCell>
        <StatusCell />
        <StatusCell />
        <StatusCell />
        <StatusCell />
        <StatusCell />
        <StatusCell />
        <StatusCell>
          <svg width="24" height="14" viewBox="0 0 24 14">
            <path d="M1.500 0v14M4.500 0v14M7.500 0v14M10.500 0v14M13.500 0v14M16.500 0v14M19.500 0v14M22.500 0v14" stroke="#8a9a28" strokeWidth="2" />
            <path d="M1.500 11v3M4.500 10v4M7.500 9v5M10.500 8v6M13.500 7v7M16.500 6v8M19.500 5v9M22.500 4v10" stroke="#1c4878" strokeWidth="2" />
          </svg>
          107975/217 kb
          <svg width="14" height="14" viewBox="0 0 14 14"><path d="M0 14 14 0M4 14 14 4M8 14l6-6M12 14l2-2" stroke="#808080" /></svg>
        </StatusCell>
      </StatusBar>
      <Shields />
    </Window>
  </>
)

export default App
